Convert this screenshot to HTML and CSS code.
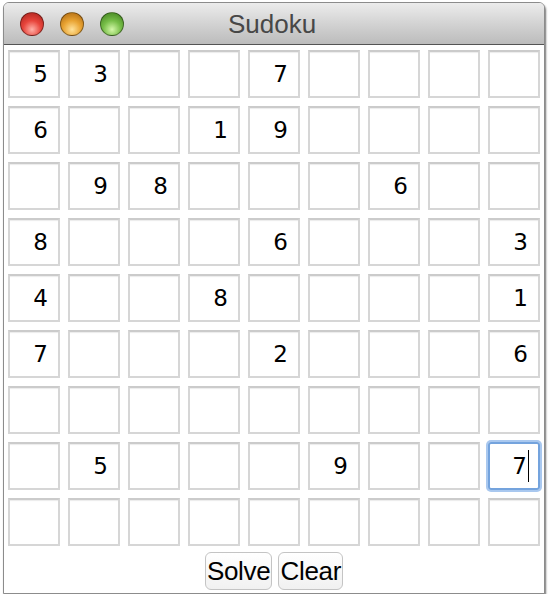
FILE: index.html
```html
<!DOCTYPE html>
<html lang="en">
<head>
    <meta charset="UTF-8">
    <meta name="viewport" content="width=device-width, initial-scale=1.0">
    <title>Sudoku</title>
    <link rel="stylesheet" href="styles.css">
</head>
<body>
    <div class="window">
        <div class="titlebar">
            <div class="lights">
                <span class="light red"></span>
                <span class="light orange"></span>
                <span class="light green"></span>
            </div>
            <div class="title">Sudoku</div>
            <div></div>
        </div>

        <div class="board">
            <div class="cell">5</div><div class="cell">3</div><div class="cell"></div><div class="cell"></div><div class="cell">7</div><div class="cell"></div><div class="cell"></div><div class="cell"></div><div class="cell"></div>
            <div class="cell">6</div><div class="cell"></div><div class="cell"></div><div class="cell">1</div><div class="cell">9</div><div class="cell"></div><div class="cell"></div><div class="cell"></div><div class="cell"></div>
            <div class="cell"></div><div class="cell">9</div><div class="cell">8</div><div class="cell"></div><div class="cell"></div><div class="cell"></div><div class="cell">6</div><div class="cell"></div><div class="cell"></div>
            <div class="cell">8</div><div class="cell"></div><div class="cell"></div><div class="cell"></div><div class="cell">6</div><div class="cell"></div><div class="cell"></div><div class="cell"></div><div class="cell">3</div>
            <div class="cell">4</div><div class="cell"></div><div class="cell"></div><div class="cell">8</div><div class="cell"></div><div class="cell"></div><div class="cell"></div><div class="cell"></div><div class="cell">1</div>
            <div class="cell">7</div><div class="cell"></div><div class="cell"></div><div class="cell"></div><div class="cell">2</div><div class="cell"></div><div class="cell"></div><div class="cell"></div><div class="cell">6</div>
            <div class="cell"></div><div class="cell"></div><div class="cell"></div><div class="cell"></div><div class="cell"></div><div class="cell"></div><div class="cell"></div><div class="cell"></div><div class="cell"></div>
            <div class="cell"></div><div class="cell">5</div><div class="cell"></div><div class="cell"></div><div class="cell"></div><div class="cell">9</div><div class="cell"></div><div class="cell"></div><div class="cell focused">7<span class="caret"></span></div>
            <div class="cell"></div><div class="cell"></div><div class="cell"></div><div class="cell"></div><div class="cell"></div><div class="cell"></div><div class="cell"></div><div class="cell"></div><div class="cell"></div>
        </div>

        <div class="buttons">
            <button>Solve</button>
            <button>Clear</button>
        </div>
    </div>
</body>
</html>
```

FILE: styles.css
```css
body {
    margin: 0;
    background-color: #fff;
    font-family: "Liberation Sans", Arial, sans-serif;
}
.window {
    margin: 2px 0 0 3px;
    width: 540px;
    border: 1px solid #8c8c8c;
    border-radius: 6px 6px 0 0;
    background-color: #fff;
    box-shadow: 1px 2px 2px rgba(0, 0, 0, 0.55);
}
.titlebar {
    height: 41px;
    display: grid;
    grid-template-columns: 1fr auto 1fr;
    align-items: center;
    background: linear-gradient(#ececec, #d3d3d3 50%, #bcbcbc);
    border-bottom: 1px solid #545454;
    border-radius: 5px 5px 0 0;
}
.lights {
    display: flex;
    gap: 16px;
    padding-left: 16px;
    padding-top: 1px;
}
.light {
    width: 22px;
    height: 22px;
    border-radius: 50%;
    border: 1px solid rgba(0, 0, 0, 0.4);
}
.red {
    background: radial-gradient(circle at 50% 75%, #ffb1a8, #e8453c 45%, #a5201a);
}
.orange {
    background: radial-gradient(circle at 50% 75%, #ffe29a, #e9a433 45%, #a8630d);
}
.green {
    background: radial-gradient(circle at 50% 75%, #d4f7a9, #77be48 45%, #3d7c1c);
}
.title {
    font-size: 26px;
    color: #474747;
    padding-top: 1px;
    margin-left: -4px;
}
.board {
    display: grid;
    grid-template-columns: repeat(9, 52px);
    grid-auto-rows: 48px;
    gap: 8px;
    padding: 5px 4px 0 4px;
}
.cell {
    display: flex;
    align-items: center;
    justify-content: flex-end;
    padding-right: 10px;
    border: 2px solid #d6d6d6;
    border-top-color: #cbcbcb;
    box-shadow: inset 0 2px 1px -1px #ececec;
    font-family: "DejaVu Sans", sans-serif;
    font-size: 23px;
    color: #000;
}
.focused {
    border-color: #74a3dd;
    border-radius: 3px;
    box-shadow: 0 0 0 2px #a9c8ef;
    padding-right: 9px;
}
.caret {
    width: 1px;
    height: 32px;
    margin-left: 1px;
    background-color: #000;
}
.buttons {
    display: flex;
    justify-content: center;
    gap: 6px;
    padding: 6px 0 3px;
}
button {
    height: 38px;
    padding: 0 1px;
    font-family: "Liberation Sans", Arial, sans-serif;
    font-size: 26px;
    letter-spacing: -0.3px;
    color: #000;
    background: linear-gradient(#ffffff, #f1f1f1);
    border: 1px solid #c4c4c4;
    border-radius: 6px;
}
```
